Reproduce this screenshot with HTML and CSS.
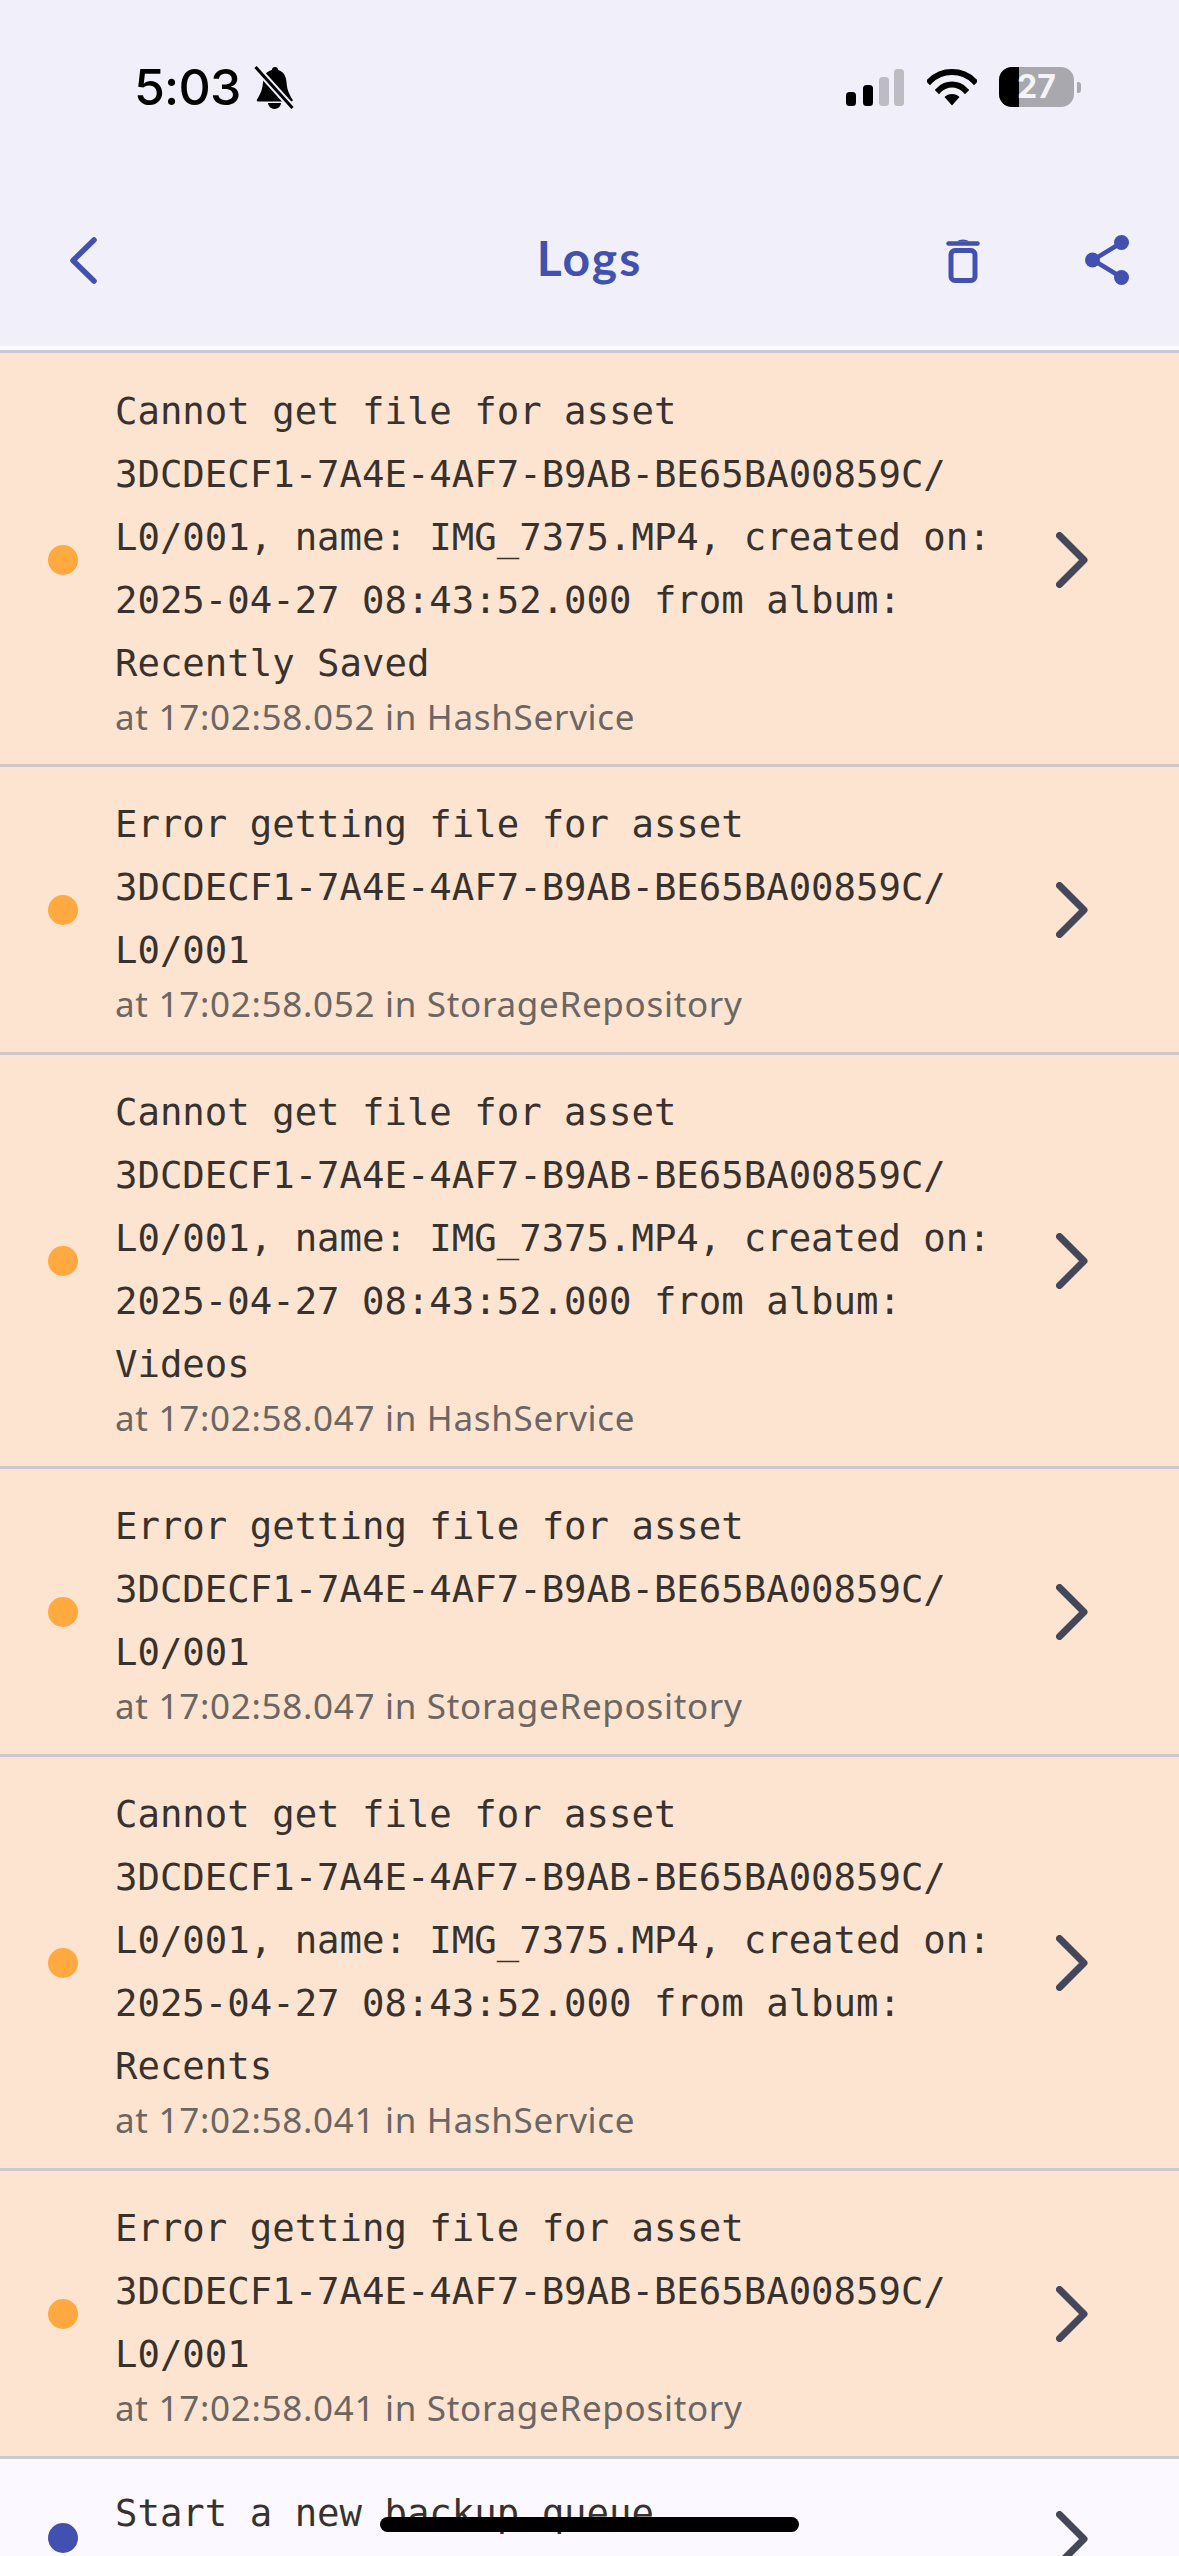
FILE: index.html
```html
<!DOCTYPE html>
<html lang="en">
<head>
<meta charset="utf-8">
<title>Logs</title>
<link rel="stylesheet" href="styles.css">
</head>
<body>
<div class="phone">
  <header class="top">
    <div class="status">
      <div class="clock"><span class="time">5:03</span>
        <svg class="bell" viewBox="0 0 40 43"><path d="M21 1c1.800 0 3 1.200 3.200 3C29.500 5.500 32 10 32.500 16c.5 7 2 11 6 17.500.6 1 0 2-1 2H4c-1 0-1.600-1-1-2C7 27 8.500 23 9 16 9.500 10 12 5.500 17.800 4 18 2.200 19.200 1 21 1z" fill="#000"/><path d="M14 37h13a6.500 6 0 0 1-13 0z" fill="#000"/><path d="M2 1.500l36 40" stroke="#f1f0fa" stroke-width="7"/><path d="M1.500 1l37 41" stroke="#000" stroke-width="3"/></svg>
      </div>
      <div class="indicators">
        <svg class="signal" viewBox="0 0 58 37"><rect x="0" y="23" width="10" height="14" rx="3.500" fill="#000"/><rect x="17" y="16" width="10" height="21" rx="3.500" fill="#000"/><rect x="33" y="8" width="10" height="29" rx="3.500" fill="#bdbcc3"/><rect x="48" y="0" width="10" height="37" rx="3.500" fill="#bdbcc3"/></svg>
        <svg class="wifi" viewBox="0 0 50 37"><path d="M3 12C8.500 6.500 16.500 3 25 3s16.500 3.500 22 9" fill="none" stroke="#000" stroke-width="6" stroke-linecap="square"/><path d="M12 21c3.500-3.500 8-5.500 13-5.500s9.500 2 13 5.500" fill="none" stroke="#000" stroke-width="6" stroke-linecap="square"/><path d="M25 25c-3 0-5.500 1-7.500 3L25 36.500 32.500 28c-2-2-4.500-3-7.500-3z" fill="#000"/></svg>
        <div class="battery"><div class="level"></div><span class="pct">27</span></div>
        <div class="nub"></div>
      </div>
    </div>
    <nav class="bar">
      <svg class="back" viewBox="0 0 27 47"><path d="M24 3 3 23.500 24 44" fill="none" stroke="#4250af" stroke-width="5.500" stroke-linecap="round" stroke-linejoin="round"/></svg>
      <h1 class="title">Logs</h1>
      <div class="actions">
        <svg class="trash" viewBox="0 0 34 45"><path d="M2.500 5.500h29" stroke="#4250af" stroke-width="4.500" stroke-linecap="round"/><path d="M11 3.500C13 .8 21 .8 23 3.500z" fill="#4250af"/><rect x="5" y="12.500" width="24" height="30" rx="4" fill="none" stroke="#4250af" stroke-width="5"/></svg>
        <svg class="share" viewBox="0 0 44 50"><path d="M36 8 8 25l28 17" fill="none" stroke="#4250af" stroke-width="4.500"/><circle cx="36.500" cy="7.500" r="7.500" fill="#4250af"/><circle cx="7.500" cy="25" r="7.500" fill="#4250af"/><circle cx="36.500" cy="42.500" r="7.500" fill="#4250af"/></svg>
      </div>
    </nav>
  </header>
  <main class="list">
    <article class="row warn five">
      <span class="dot"></span>
      <div class="body"><p class="msg">Cannot get file for asset
3DCDECF1-7A4E-4AF7-B9AB-BE65BA00859C/
L0/001, name: IMG_7375.MP4, created on:
2025-04-27 08:43:52.000 from album:
Recently Saved</p><p class="meta">at 17:02:58.052 in HashService</p></div>
      <svg class="chev" viewBox="0 0 32 56"><path d="M3.500 3.500 28 28 3.500 52.500" fill="none" stroke="#44475a" stroke-width="7" stroke-linecap="round" stroke-linejoin="round"/></svg>
    </article>
    <article class="row warn">
      <span class="dot"></span>
      <div class="body"><p class="msg">Error getting file for asset
3DCDECF1-7A4E-4AF7-B9AB-BE65BA00859C/
L0/001</p><p class="meta">at 17:02:58.052 in StorageRepository</p></div>
      <svg class="chev" viewBox="0 0 32 56"><path d="M3.500 3.500 28 28 3.500 52.500" fill="none" stroke="#44475a" stroke-width="7" stroke-linecap="round" stroke-linejoin="round"/></svg>
    </article>
    <article class="row warn five">
      <span class="dot"></span>
      <div class="body"><p class="msg">Cannot get file for asset
3DCDECF1-7A4E-4AF7-B9AB-BE65BA00859C/
L0/001, name: IMG_7375.MP4, created on:
2025-04-27 08:43:52.000 from album:
Videos</p><p class="meta">at 17:02:58.047 in HashService</p></div>
      <svg class="chev" viewBox="0 0 32 56"><path d="M3.500 3.500 28 28 3.500 52.500" fill="none" stroke="#44475a" stroke-width="7" stroke-linecap="round" stroke-linejoin="round"/></svg>
    </article>
    <article class="row warn">
      <span class="dot"></span>
      <div class="body"><p class="msg">Error getting file for asset
3DCDECF1-7A4E-4AF7-B9AB-BE65BA00859C/
L0/001</p><p class="meta">at 17:02:58.047 in StorageRepository</p></div>
      <svg class="chev" viewBox="0 0 32 56"><path d="M3.500 3.500 28 28 3.500 52.500" fill="none" stroke="#44475a" stroke-width="7" stroke-linecap="round" stroke-linejoin="round"/></svg>
    </article>
    <article class="row warn five">
      <span class="dot"></span>
      <div class="body"><p class="msg">Cannot get file for asset
3DCDECF1-7A4E-4AF7-B9AB-BE65BA00859C/
L0/001, name: IMG_7375.MP4, created on:
2025-04-27 08:43:52.000 from album:
Recents</p><p class="meta">at 17:02:58.041 in HashService</p></div>
      <svg class="chev" viewBox="0 0 32 56"><path d="M3.500 3.500 28 28 3.500 52.500" fill="none" stroke="#44475a" stroke-width="7" stroke-linecap="round" stroke-linejoin="round"/></svg>
    </article>
    <article class="row warn">
      <span class="dot"></span>
      <div class="body"><p class="msg">Error getting file for asset
3DCDECF1-7A4E-4AF7-B9AB-BE65BA00859C/
L0/001</p><p class="meta">at 17:02:58.041 in StorageRepository</p></div>
      <svg class="chev" viewBox="0 0 32 56"><path d="M3.500 3.500 28 28 3.500 52.500" fill="none" stroke="#44475a" stroke-width="7" stroke-linecap="round" stroke-linejoin="round"/></svg>
    </article>
    <article class="row info">
      <span class="dot"></span>
      <div class="body"><p class="msg">Start a new backup queue</p></div>
      <svg class="chev" viewBox="0 0 32 56"><path d="M3.500 3.500 28 28 3.500 52.500" fill="none" stroke="#44475a" stroke-width="7" stroke-linecap="round" stroke-linejoin="round"/></svg>
    </article>
  </main>
  <div class="home"></div>
</div>
</body>
</html>
```
FILE: styles.css
```css
* { box-sizing: border-box; }
html, body { margin: 0; padding: 0; }
.phone { position: relative; width: 1179px; height: 2556px; overflow: hidden; background: #fbf9ff; }
.top { height: 350px; background: #f1f0fa; border-bottom: 4px solid #fbfaff; padding-top: 56px; }
.status { display: flex; justify-content: space-between; align-items: center; height: 62px; padding: 0 98px 0 134px; }
.clock { display: flex; align-items: center; gap: 13px; }
.time { font: 500 50px/62px "Inter", "Liberation Sans", sans-serif; color: #000; letter-spacing: -0.8px; }
.bell { width: 40px; height: 43px; }
.indicators { display: flex; align-items: center; }
.signal { width: 58px; height: 37px; margin: 0 23px 0 0; }
.wifi { width: 50px; height: 37px; margin-right: 22px; }
.battery { position: relative; width: 75px; height: 40px; border-radius: 13px; background: #a9a8ae; overflow: hidden; display: flex; align-items: center; justify-content: center; }
.level { position: absolute; left: 0; top: 0; bottom: 0; width: 20px; background: #000; }
.pct { position: relative; font: 700 32px/40px "Inter", "Liberation Sans", sans-serif; color: #f4f4f6; }
.nub { width: 4px; height: 11px; margin-left: 3px; background: #a9a8ae; border-radius: 0 3px 3px 0; }
.bar { display: flex; align-items: center; justify-content: space-between; height: 90px; margin-top: 97px; padding: 0 50px 0 70px; position: relative; }
.back { width: 27px; height: 47px; }
.title { position: absolute; left: 0; right: 0; margin: 0; padding-bottom: 5px; text-align: center; font: 700 48px/56px "Lato", "Noto Sans", sans-serif; letter-spacing: 2px; color: #4250af; }
.actions { display: flex; align-items: center; gap: 105px; }
.trash { width: 34px; height: 45px; }
.share { width: 44px; height: 50px; }
.list { display: block; }
.row { display: flex; align-items: center; height: 287.900px; border-top: 3px solid #cbc8cf; padding: 2px 91px 0 48px; }
.row.five { height: 414px; }
.warn { background: #fde4d0; }
.info { background: #fbf9ff; height: 100px; align-items: flex-start; padding-top: 23px; }
.dot { flex: none; width: 30px; height: 30px; border-radius: 50%; background: #ffa940; margin-right: 37px; }
.info .dot { background: #4250af; margin-top: 41px; }
.body { flex: 1; min-width: 0; }
.msg { margin: 0; white-space: pre; font: 400 37.300px/63px "DejaVu Sans Mono", monospace; color: #38322f; }
.meta { margin: -1px 0 0; font: 400 35px/46px "Noto Sans", "Lato", sans-serif; letter-spacing: .7px; color: #6b6663; }
.chev { flex: none; width: 32px; height: 56px; }
.info .chev { margin-top: 29px; }
.home { position: absolute; left: 380px; top: 2517px; width: 419px; height: 15px; border-radius: 8px; background: #000; }
```
